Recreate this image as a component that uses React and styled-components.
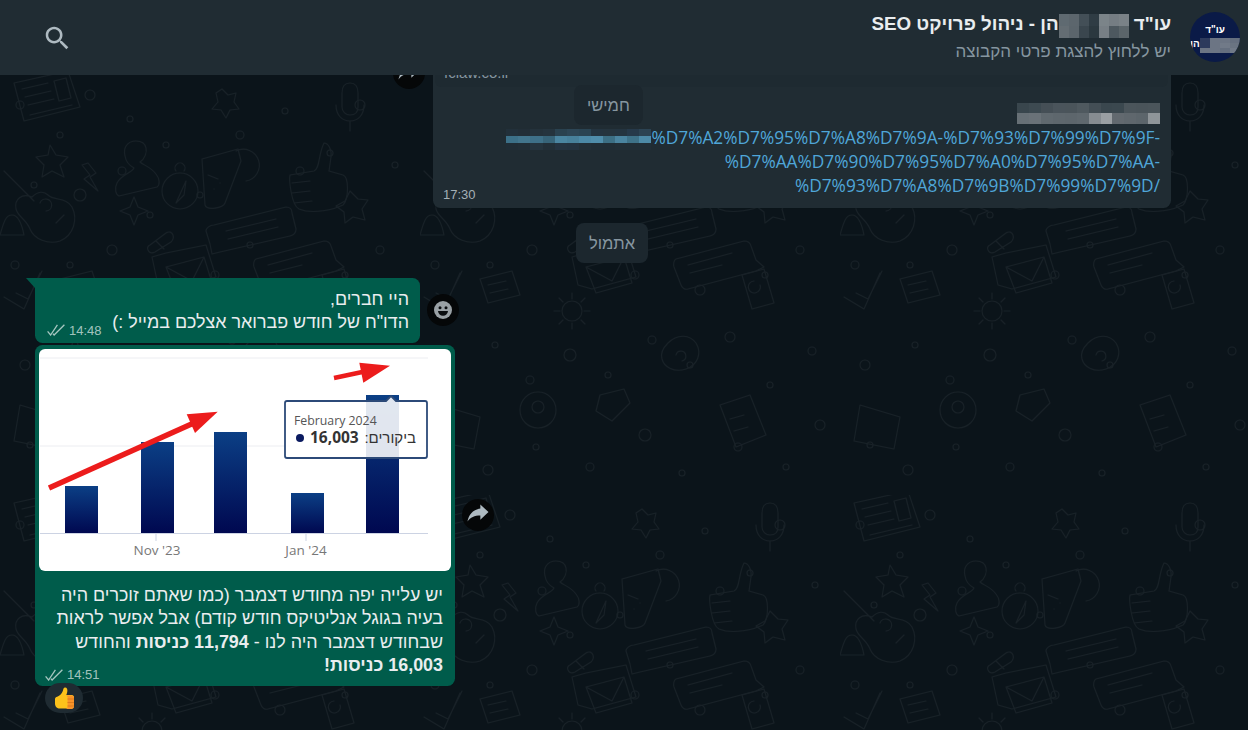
import React from "react";
import styled, { createGlobalStyle } from "styled-components";

const GlobalStyle = createGlobalStyle`
  html, body { margin: 0; padding: 0; height: 100%; background: #0b141a; }
  body { font-family: "Liberation Sans", "DejaVu Sans", sans-serif; overflow: hidden; }
  #root { height: 100%; }
`;

const titleCells = [
  "#5f6a71", "#5c666d", "#434f57", "#2f3c44", "#7b8489", "#757d83", "#7a8287",
  "#646d73", "#5b656c", "#3a464e", "#2b383f", "#777f85", "#4d585f", "#5b656a",
];
const avatarCells = [
  "#2c3a5c", "#6c7584", "#6c7584", "#656f7f", "#2c3a5c", "#6c7584", "#717a88", "#6a7482",
  "#6c7584", "#6c7584", "#656f7f", "#717a88",
];
const textCells = [
  "#39464d", "#3d4a51", "#454f56", "#4a545b", "#4a545a", "#4f595f", "#434e55", "#3a474e", "#3b484f", "#4b555b", "#4a545a", "#4b555b",
  "#677076", "#6a7278", "#60696f", "#5e676d", "#5d666c", "#5f686e", "#868c91", "#9a9fa3", "#62696f", "#5f676d", "#5c656b", "#8f9599",
];
const linkCells = [
  "#22303a", "#222e37", "#24323b", "#25343e", "#2a4250", "#2d4656", "#2a4453", "#243440", "#25343e", "#243440", "#26394a", "#2c4353",
  "#3c7088", "#42758d", "#3e7088", "#376479", "#4a85a1", "#47809b", "#4c89a7", "#4f8dab", "#3c6f85", "#4a84a0", "#3e7289", "#4d8aa8",
  "#202d36", "#212e37", "#25343e", "#222f38", "#243341", "#233240", "#222f38", "#202d36", "#202d36", "#212e37", "#212e37", "#212e37",
];

const dots = [
  [20, 30, 4], [60, 60, 3], [90, 20, 5], [130, 44, 3], [34, 110, 3], [80, 120, 6], [122, 96, 4], [166, 70, 3],
  [15, 190, 4], [70, 190, 3], [112, 175, 5], [150, 140, 3], [200, 120, 3], [240, 60, 4], [285, 36, 3], [300, 96, 4],
  [330, 78, 3], [360, 30, 5], [395, 90, 3], [215, 200, 4], [250, 170, 3], [280, 215, 5], [345, 200, 3], [380, 175, 4],
  [25, 290, 5], [75, 270, 3], [110, 305, 4], [150, 280, 6], [188, 300, 3], [232, 265, 4], [270, 290, 3], [310, 262, 5],
  [350, 310, 3], [392, 276, 4], [30, 370, 3], [68, 395, 5], [116, 372, 3], [170, 392, 4], [225, 360, 6], [262, 398, 3],
  [318, 372, 4], [366, 392, 3], [400, 350, 5],
];

function Mosaic({ cells, cols, cell, cellH }) {
  return (
    <MosaicGrid $cols={cols} $w={cell} $h={cellH || cell} aria-hidden="true">
      {cells.map((c, i) => (
        <span key={i} style={{ background: c }} />
      ))}
    </MosaicGrid>
  );
}

function Wallpaper() {
  return (
    <WallpaperSvg aria-hidden="true">
      <defs>
        <pattern id="doodles" width="420" height="420" patternUnits="userSpaceOnUse">
          <g fill="none" stroke="#182127" strokeWidth="1.1" strokeLinecap="round" strokeLinejoin="round">
            {dots.map(([x, y, r], i) => (
              <circle key={i} cx={x} cy={y} r={r} />
            ))}
            {/* newspaper */}
            <path d="M14 8l54-12 12 36-56 14zM22 14l26-6M25 22l26-6M28 30l26-6M30 40l42-10M54 6l12-3 5 20-12 3z" />
            {/* person */}
            <path d="M136 66c-9 0-13 7-11 15 1 6 5 10 9 12-2 5-12 6-17 15-3 6-1 12 2 13l38-9c3-2 3-8-1-13-5-7-13-9-16-12 5-3 7-10 6-14-1-5-5-7-10-7z" />
            {/* drink */}
            <path d="M202 84l36-10 3 12-16 42c-2 5-18 8-20 2zM236 76a16 16 0 1 1 10 30M208 100l10 4M214 114h.1M220 108h.1" />
            {/* thumb */}
            <path d="M290 100l24-4c6-2 4-16 10-28 4 0 8 6 7 14l-2 14 14 4c6 2 6 24 0 30-8 4-30 10-44 4-8-4-10-30-9-34zM292 108l18-2M292 118l18-2M294 128l18-2" />
            {/* speech bubbles */}
            <path d="M214 150l72-18c4 0 6 2 6 6l4 16c0 4-2 6-6 7l-70 16-8 2-2-10-4-13c0-3 4-6 8-6zM226 156l50-12M228 164l50-12" />
            <path d="M256 184l68-18c3 0 6 1 7 5l5 14 8 7-8 4-68 18c-3 1-6-1-7-4l-7-18c-1-3 0-7 2-8zM268 190l44-12M270 198l32-8" />
            {/* compass */}
            <circle cx="180" cy="116" r="18" />
            <path d="M176 96a5 5 0 1 1 8 0M186 106l-10 22 8-8z" />
            {/* guitar */}
            <path d="M4 96l30 30M32 122c-10-4-18 2-16 12 2 8 10 10 14 20 4 10 18 16 30 12 14-6 18-22 12-34-6-10-18-6-24-12-4-4-10-4-16 2zM40 128a6 6 0 1 1 6 8M56 148l8-8" />
            {/* stars */}
            <path d="M50 70l6 10 12 2-8 8 4 12-12-6-10 6 2-12-8-8 12-2z" />
            <path d="M222 14l6 6 8-2-2 9 5 7-9 1-4 8-5-8-9-1 6-7-2-9zM350 116l8 8 10 1-6 9 3 11-12-3-8 6-1-11-8-6 9-5z" />
            <path d="M134 122l4 10 10 4-10 4-4 10-4-10-10-4 10-4z" />
            {/* envelope */}
            <path d="M166 178l40-8 10 32-44 12-14-4-6-28zM166 192l38-10 8 26-36 10zM166 192l26 14 12-24" />
            {/* pill, bolt */}
            <path d="M150 170l16-12c3-2 6-1 7 2s0 5-2 7l-16 10c-4 2-6 0-7-2s0-4 2-5zM156 166l8 8" />
            <path d="M88 88l8 10-6 4 8 14-14-12 6-4-8-10z" />
            {/* gear, check, mic */}
            <circle cx="152" cy="236" r="10" />
            <path d="M152 218v6M152 248v6M134 236h6M164 236h6M139 223l4 4M161 245l4 4M139 249l4-4M161 227l4-4" />
            <path d="M4 222l20 12 16-36M16 218l12 6 14-28" />
            <path d="M350 8c6 0 8 4 8 10v14c0 6-4 8-8 8s-8-3-8-8V18c0-6 2-10 8-10zM336 30c0 10 6 16 14 16s14-6 14-16M350 46v10" />
            {/* bell, badge, notes */}
            <path d="M0 160c4-14 6-20 12-20s10 10 12 20zM322 200l22-6 10 34-22 6zM340 210a6 6 0 1 1-6-4" />
            <path d="M60 204l32-8 8 24-32 8zM68 210l18-4M70 218l18-4" />
            <path d="M248 268c10-10 22-8 28 0 6 10 2 22-10 26-12 4-22-2-24-10-2-6 2-12 6-16zM256 280a5 5 0 1 1 6 6" />
            <path d="M100 335a18 18 0 0 1 36 0c0 10-8 18-18 18s-18-8-18-18zM112 332a6 6 0 1 0 12 0a6 6 0 1 0-12 0" />
            <path d="M300 330l30-10 16 40-30 12zM310 344l14-4M314 356l14-4M180 320l24-6 6 14-18 18-16-10zM20 330l40 12-6 32-40-8z" />
          </g>
        </pattern>
      </defs>
      <rect width="100%" height="100%" fill="url(#doodles)" />
    </WallpaperSvg>
  );
}

function Ticks() {
  return (
    <TickIcon viewBox="0 0 18 12" aria-hidden="true">
      <path d="M0.6 7.400l3 3.600L10.400 0.800M6 9.800l1.100 1.200L17.400 0.800" />
    </TickIcon>
  );
}

function Chart() {
  const bars = [
    { x: 65, top: 486 },
    { x: 141, top: 442 },
    { x: 214, top: 432 },
    { x: 291, top: 493 },
    { x: 366, top: 395 },
  ];
  return (
    <ChartFrame>
      <svg viewBox="39 349 412 222" width="412" height="222">
        <defs>
          <linearGradient id="barFill" x1="0" y1="0" x2="0" y2="1">
            <stop offset="0" stopColor="#0b3f85" />
            <stop offset="1" stopColor="#000850" />
          </linearGradient>
        </defs>
        <rect x="39" y="349" width="412" height="222" fill="#fff" />
        <path d="M40 358H428M40 446H428" stroke="#ecedf1" strokeWidth="1" />
        <path d="M40 533.500H428M156 534v7M306 534v7" stroke="#ccd3e3" strokeWidth="1" />
        {bars.map((b) => (
          <rect key={b.x} x={b.x} y={b.top} width="33" height={533 - b.top} fill="url(#barFill)" />
        ))}
        <path d="M49 488L196 422" stroke="#ec1c1c" strokeWidth="5.500" />
        <path d="M217.700 411.700L186.700 414.300L195 433Z" fill="#ec1c1c" />
        <path d="M334 378L367 371" stroke="#ec1c1c" strokeWidth="4.500" />
        <path d="M390 365.700L359.300 362.700L363.300 382.700Z" fill="#ec1c1c" />
        <path
          d="M287 401H386L391 396L396 401H425Q427 401 427 403V456Q427 458 425 458H287Q285 458 285 456V403Q285 401 287 401Z"
          fill="#fff"
          fillOpacity="0.88"
          stroke="#2c4a78"
          strokeWidth="1.800"
        />
        <ChartLabel x="157" y="555" textAnchor="middle">Nov '23</ChartLabel>
        <ChartLabel x="306" y="555" textAnchor="middle">Jan '24</ChartLabel>
        <TipMonth x="294" y="425">February 2024</TipMonth>
        <circle cx="300" cy="438" r="4" fill="#0a1a60" />
        <TipValue x="310" y="443">16,003</TipValue>
        <TipName x="416" y="443">ביקורים:</TipName>
      </svg>
    </ChartFrame>
  );
}

function ThumbsUp() {
  return (
    <svg viewBox="0 0 24 24" width="24" height="24" aria-hidden="true">
      <path
        d="M3 13c0-1.400 1-2 2.200-2.300 2.600-.8 4.800-3 5.600-5.600.4-1.400.6-3.600 2.300-3.600 1.800 0 2.600 2 2.200 4.200-.2 1.100-.6 2.300-1 3.300h5.500c1.500 0 2.200 1 2.200 2.100v9c0 1.400-1 2.400-2.300 2.400H8c-3 0-5-2-5-5z"
        fill="#fcc21b"
      />
      <path d="M14 9.500h5.800c1.500 0 2.200 1 2.200 2.100v9c0 1.400-1 2.400-2.300 2.400H14c1.200-.6 1.600-1.400 1.600-2.400v-9c0-1-.7-1.800-1.600-2.100z" fill="#f79329" />
      <path d="M15.500 13H22M15.500 16.500H22M15.500 20H22" stroke="#d9791c" strokeWidth="0.9" />
    </svg>
  );
}

export default function App() {
  return (
    <>
      <GlobalStyle />
      <Page>
        <Header>
          <Avatar>
            <AvatarLine>עו"ד</AvatarLine>
            <AvatarLine>הן</AvatarLine>
            <AvatarMask>
              <Mosaic cells={avatarCells} cols={4} cell={10} cellH={5} />
            </AvatarMask>
          </Avatar>
          <HeaderText>
            <Title>
              עו"ד <Mosaic cells={titleCells} cols={7} cell={10} cellH={12} />הן - ניהול פרויקט SEO
            </Title>
            <Subtitle>יש ללחוץ להצגת פרטי הקבוצה</Subtitle>
          </HeaderText>
          <SearchButton aria-label="search">
            <svg viewBox="0 0 24 24" width="30" height="30">
              <path
                fill="#aebac1"
                d="M15.900 14.300h-.85l-.3-.3c1-1.200 1.650-2.700 1.650-4.400C16.400 5.900 13.400 3 9.700 3S3 5.900 3 9.600s3 6.700 6.700 6.700c1.700 0 3.200-.6 4.400-1.650l.3.3v.85l5.100 5.100 1.550-1.550-5.150-5.050zm-6.200 0c-2.600 0-4.700-2.100-4.700-4.700s2.100-4.650 4.700-4.650 4.650 2.050 4.650 4.650-2.050 4.700-4.650 4.700z"
              />
            </svg>
          </SearchButton>
        </Header>

        <Chat>
          <Wallpaper />
          <TopForward>
            <svg viewBox="0 0 24 24" width="28" height="28" aria-hidden="true">
              <path fill="#aebac1" d="M14 6.500V3l7 6.500-7 6.500v-3.600c-5 0-8.500 1.600-11 5.100 1-5 4-10 11-11z" />
            </svg>
          </TopForward>
          <DayChip>חמישי</DayChip>
          <Messages>
            <IncomingRow>
              <IncomingBubble>
                <Preview>fclaw.co.il</Preview>
                <MosaicLine>
                  <Mosaic cells={textCells} cols={12} cell={11.900} cellH={10.500} />
                </MosaicLine>
                <LinkLine>
                  <Mosaic cells={linkCells} cols={12} cell={12.100} cellH={7} />
                  %D7%A2%D7%95%D7%A8%D7%9A-%D7%93%D7%99%D7%9F-
                </LinkLine>
                <LinkLine>%D7%AA%D7%90%D7%95%D7%A0%D7%95%D7%AA-</LinkLine>
                <LastRow>
                  <LinkLine>%D7%93%D7%A8%D7%9B%D7%99%D7%9D/</LinkLine>
                  <IncomingTime>17:30</IncomingTime>
                </LastRow>
              </IncomingBubble>
            </IncomingRow>

            <DateRow>
              <DatePill>אתמול</DatePill>
            </DateRow>

            <OutgoingRow>
              <OutgoingBubble $tail $width={385}>
                <BodyText>היי חברים,</BodyText>
                <LastRow>
                  <BodyText>הדו"ח של חודש פברואר אצלכם במייל :)</BodyText>
                  <Meta>
                    14:48
                    <Ticks />
                  </Meta>
                </LastRow>
              </OutgoingBubble>
              <SideButton aria-label="react">
                <svg viewBox="0 0 20 20" width="20" height="20" aria-hidden="true">
                  <circle cx="10" cy="10" r="9" fill="#9aa1a5" />
                  <circle cx="7" cy="7.800" r="1.500" fill="#0a0d0f" />
                  <circle cx="13" cy="7.800" r="1.500" fill="#0a0d0f" />
                  <path d="M5 11h10c-.3 3-2.400 4.800-5 4.800S5.300 14 5 11z" fill="#0a0d0f" />
                </svg>
              </SideButton>
            </OutgoingRow>

            <OutgoingRow>
              <ImageBubble>
                <Chart />
                <Caption>
                  <BodyText>יש עלייה יפה מחודש דצמבר (כמו שאתם זוכרים היה</BodyText>
                  <BodyText>בעיה בגוגל אנליטיקס חודש קודם) אבל אפשר לראות</BodyText>
                  <BodyText>
                    שבחודש דצמבר היה לנו - <b>11,794 כניסות</b> והחודש
                  </BodyText>
                  <LastRow>
                    <BodyText>
                      <b>16,003 כניסות!</b>
                    </BodyText>
                    <CaptionMeta>
                      14:51
                      <Ticks />
                    </CaptionMeta>
                  </LastRow>
                </Caption>
                <Reaction>
                  <ThumbsUp />
                </Reaction>
              </ImageBubble>
              <SideButton aria-label="forward">
                <svg viewBox="0 0 24 24" width="28" height="28" aria-hidden="true">
                  <path fill="#aebac1" d="M14 6.500V3l7 6.500-7 6.500v-3.600c-5 0-8.500 1.600-11 5.100 1-5 4-10 11-11z" />
                </svg>
              </SideButton>
            </OutgoingRow>
          </Messages>
        </Chat>
      </Page>
    </>
  );
}

const Page = styled.div`
  height: 730px;
  display: flex;
  flex-direction: column;
  overflow: hidden;
`;

const Header = styled.header`
  height: 75px;
  flex: none;
  display: flex;
  align-items: center;
  direction: rtl;
  background: #202c33;
  padding: 0 8px 0 0;
  position: relative;
  z-index: 2;
`;

const Avatar = styled.div`
  width: 50px;
  height: 50px;
  margin-top: -2px;
  border-radius: 50%;
  background: #0a1a47;
  color: #fff;
  font-size: 10px;
  font-weight: 700;
  line-height: 14px;
  display: flex;
  flex-direction: column;
  justify-content: center;
  align-items: center;
  position: relative;
  overflow: hidden;
  flex: none;
`;

const AvatarLine = styled.div`
  &:nth-child(2) {
    align-self: flex-end;
  }
`;

const AvatarMask = styled.div`
  position: absolute;
  top: 26px;
  left: 10px;
`;

const HeaderText = styled.div`
  margin-right: 19px;
  display: flex;
  flex-direction: column;
  gap: 4px;
  margin-top: -1px;
`;

const Title = styled.div`
  font-size: 18.800px;
  font-weight: 700;
  line-height: 23px;
  color: #e9edef;
  white-space: nowrap;
`;

const Subtitle = styled.div`
  font-size: 17px;
  line-height: 20px;
  color: #8696a0;
  white-space: nowrap;
`;

const MosaicGrid = styled.span`
  display: inline-grid;
  grid-template-columns: repeat(${(p) => p.$cols}, ${(p) => p.$w}px);
  grid-auto-rows: ${(p) => p.$h}px;
  vertical-align: middle;
  direction: ltr;
  filter: blur(0.4px);
`;

const SearchButton = styled.button`
  margin-right: auto;
  margin-left: 42px;
  background: none;
  border: 0;
  padding: 0;
  width: 30px;
  height: 30px;
`;

const Chat = styled.main`
  flex: 1;
  min-height: 0;
  position: relative;
  overflow: hidden;
  display: flex;
  flex-direction: column;
  justify-content: flex-end;
  background: #0b141a;
`;

const WallpaperSvg = styled.svg`
  position: absolute;
  inset: 0;
  width: 100%;
  height: 100%;
`;

const Messages = styled.div`
  position: relative;
  flex: none;
  display: flex;
  flex-direction: column;
  padding: 0 0 44px 35px;
`;

const IncomingRow = styled.div`
  display: flex;
  justify-content: flex-end;
  padding-right: 77px;
  direction: ltr;
`;

const Bubble = styled.div`
  border-radius: 7.500px;
  box-shadow: 0 1px 0.500px rgba(11, 20, 26, 0.13);
  direction: rtl;
`;

const IncomingBubble = styled(Bubble)`
  width: 738px;
  box-sizing: border-box;
  background: #202c33;
  padding: 0 11px 10px 10px;
`;

const Preview = styled.div`
  margin: 0 -8px 16px;
  padding: 0 9px 6px;
  font-size: 15px;
  line-height: 16px;
  color: #8696a0;
  direction: ltr;
  background: #1e2a31;
  border-radius: 0 0 6px 6px;
`;

const MosaicLine = styled.div`
  height: 21px;
  margin-bottom: 2px;
  display: flex;
`;

const LinkLine = styled.div`
  font-family: "Open Sans", "Liberation Sans", sans-serif;
  font-size: 17.300px;
  line-height: 24px;
  color: #4fa6d8;
  direction: ltr;
  text-align: right;
  white-space: nowrap;
`;

const LastRow = styled.div`
  display: flex;
  align-items: flex-end;
  justify-content: space-between;
`;

const IncomingTime = styled.span`
  font-size: 13px;
  line-height: 15px;
  color: #a4afb6;
  margin-bottom: -4px;
`;

const DateRow = styled.div`
  display: flex;
  justify-content: center;
  padding-right: 59px;
  margin: 15px 0;
`;

const DatePill = styled.div`
  height: 40px;
  box-sizing: border-box;
  padding: 0 13px;
  border-radius: 8px;
  background: #1c272e;
  color: #8696a0;
  font-size: 16.500px;
  line-height: 40px;
`;

const DayChip = styled(DatePill)`
  position: absolute;
  top: 10px;
  left: 574px;
  z-index: 1;
  direction: rtl;
`;

const TopForward = styled.div`
  position: absolute;
  top: -18px;
  left: 393px;
  width: 32px;
  height: 32px;
  border-radius: 50%;
  background: #050708;
  display: flex;
  align-items: center;
  justify-content: center;
  z-index: 1;
`;

const OutgoingRow = styled.div`
  display: flex;
  align-items: center;
  gap: 7px;
  margin-bottom: 2px;
  &:last-child {
    margin-bottom: 0;
  }
`;

const OutgoingBubble = styled(Bubble)`
  position: relative;
  width: ${(p) => p.$width}px;
  box-sizing: border-box;
  height: 65px;
  padding: 10px 11px 4px 11px;
  background: #005c4b;
  border-top-left-radius: ${(p) => (p.$tail ? 0 : 7.5)}px;
  &::before {
    content: "";
    position: absolute;
    top: 0;
    left: -9px;
    border-top: 10px solid #005c4b;
    border-left: 9px solid transparent;
  }
`;

const BodyText = styled.div`
  font-size: 17.900px;
  line-height: 23.600px;
  color: #e9edef;
  white-space: nowrap;
  b {
    font-weight: 700;
  }
`;

const Meta = styled.span`
  display: flex;
  align-items: center;
  gap: 4px;
  direction: rtl;
  font-size: 13px;
  line-height: 15px;
  color: rgba(255, 255, 255, 0.65);
  margin-left: 1px;
  margin-bottom: -3px;
`;

const CaptionMeta = styled(Meta)`
  margin-left: -2px;
  margin-bottom: -4px;
`;

const TickIcon = styled.svg`
  width: 18px;
  height: 12px;
  fill: none;
  stroke: rgba(255, 255, 255, 0.65);
  stroke-width: 1.300;
`;

const ImageBubble = styled(Bubble)`
  position: relative;
  width: 420px;
  box-sizing: border-box;
  padding: 4px;
  background: #005c4b;
`;

const ChartFrame = styled.div`
  height: 222px;
  border-radius: 6px;
  overflow: hidden;
  direction: ltr;
  svg {
    display: block;
  }
`;

const Caption = styled.div`
  padding: 13px 8px 4px 8px;
`;

const Reaction = styled.div`
  position: absolute;
  left: 10px;
  bottom: -27px;
  width: 38px;
  height: 30px;
  border-radius: 15px;
  background: #1f2b32;
  display: flex;
  align-items: center;
  justify-content: center;
`;

const SideButton = styled.button`
  width: 32px;
  height: 32px;
  border: 0;
  padding: 0;
  border-radius: 50%;
  background: #050708;
  display: flex;
  align-items: center;
  justify-content: center;
`;

const ChartLabel = styled.text`
  font-family: "Open Sans", "Liberation Sans", sans-serif;
  font-size: 13.500px;
  fill: #777;
`;

const TipMonth = styled.text`
  font-family: "Open Sans", "Liberation Sans", sans-serif;
  font-size: 12.300px;
  fill: #555;
`;

const TipValue = styled.text`
  font-family: "Open Sans", "Liberation Sans", sans-serif;
  font-size: 15.500px;
  font-weight: 700;
  fill: #333;
`;

const TipName = styled.text`
  font-family: "Liberation Sans", sans-serif;
  font-size: 15px;
  fill: #333;
  direction: rtl;
`;
